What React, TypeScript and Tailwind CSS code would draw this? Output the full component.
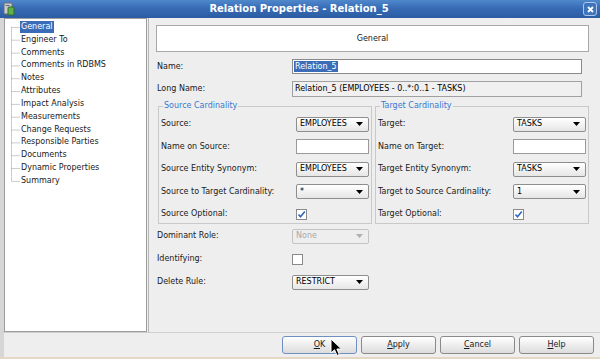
import React from 'react';

const treeItems = [
  'General',
  'Engineer To',
  'Comments',
  'Comments in RDBMS',
  'Notes',
  'Attributes',
  'Impact Analysis',
  'Measurements',
  'Change Requests',
  'Responsible Parties',
  'Documents',
  'Dynamic Properties',
  'Summary',
];

const Arrow = ({ disabled }: { disabled?: boolean }) => (
  <svg width="7" height="4" viewBox="0 0 7 4" className="mr-[5px] shrink-0">
    <path d="M0 0 H7 L3.5 4 Z" fill={disabled ? '#b0b0b0' : '#000'} />
  </svg>
);

const Combo = ({ value, disabled, w = 'w-[73px]' }: { value: string; disabled?: boolean; w?: string }) => (
  <div
    className={`flex h-[15px] ${w} items-center justify-between rounded-[2px] border ${
      disabled
        ? 'border-[#c4c4c4] bg-[#eeeeee] text-[#a8a8a8]'
        : 'border-[#8e8e8e] bg-gradient-to-b from-white to-[#e6e6e6] text-black'
    }`}
  >
    <span className="pl-[3px] leading-none">{value}</span>
    <Arrow disabled={disabled} />
  </div>
);

const TextBox = () => <div className="h-[15px] w-[73px] border border-[#9a9a9a] bg-white" />;

const Check = ({ checked }: { checked?: boolean }) => (
  <div className="flex h-[11px] w-[11px] items-center justify-center border border-[#8a8a8a] bg-white">
    {checked && (
      <svg width="9" height="9" viewBox="0 0 9 9">
        <path d="M1.5 4.5 L3.5 6.8 L7.8 1.5" fill="none" stroke="#2f66c6" strokeWidth="1.6" />
      </svg>
    )}
  </div>
);

const Row = ({ label, children }: { label: string; children: React.ReactNode }) => (
  <div className="flex h-[15px] items-center">
    <span className="w-[135px] shrink-0 leading-none">{label}</span>
    {children}
  </div>
);

const Group = ({ title, children }: { title: string; children: React.ReactNode }) => (
  <fieldset className="w-[213px] border border-[#c9c9c9] px-[2px] pb-[1px]">
    <legend className="ml-[2px] px-[1px] leading-[10px] text-[#3a78d0]">{title}</legend>
    <div className="flex flex-col gap-[7.5px] pt-[5.5px]">{children}</div>
  </fieldset>
);

const Btn = ({ m, rest, focus }: { m: string; rest: string; focus?: boolean }) => (
  <div
    className={`flex h-[18px] w-[75px] items-center justify-center rounded-[3px] border bg-gradient-to-b from-white to-[#dcdcdc] ${
      focus ? 'border-[#6f8fc0]' : 'border-[#8a8a8a]'
    }`}
  >
    <span>
      <span className="underline">{m}</span>
      {rest}
    </span>
  </div>
);

export default function App() {
  return (
    <div
      className="flex h-[359px] w-[600px] flex-col overflow-hidden bg-[#eeeeee] text-[8px] text-[#1a1a1a]"
      style={{ fontFamily: '"DejaVu Sans", sans-serif' }}
    >
      {/* Title bar */}
      <div className="flex h-[18px] shrink-0 items-center bg-gradient-to-b from-[#5088cc] via-[#3569b2] to-[#2b5da3] px-[3px]">
        <svg width="12" height="14" viewBox="0 0 12 14">
          <rect x="1" y="1" width="8" height="11" rx="1" fill="#c8ccd0" stroke="#6a6f75" />
          <rect x="5" y="5" width="6" height="8" rx="1" fill="#5fb04a" stroke="#2f6e25" />
          <rect x="2.5" y="3" width="4" height="1" fill="#6a6f75" />
        </svg>
        <div className="flex-1 text-center text-[10px] font-bold leading-none text-white">
          Relation Properties - Relation_5
        </div>
        <div className="flex h-[14px] w-[14px] items-center justify-center rounded-[3px] border border-[#a9c6ec] bg-[#3e74bd]">
          <svg width="7" height="7" viewBox="0 0 7 7">
            <path d="M1 1 L6 6 M6 1 L1 6" stroke="#fff" strokeWidth="1.8" />
          </svg>
        </div>
      </div>

      {/* Main */}
      <div className="flex h-[314px] shrink-0 border-l-[4px] border-[#d6d6d6]">
        {/* Tree */}
        <div className="w-[143px] shrink-0 border border-[#9c9c9c] bg-white pt-[1.5px]">
          <div className="flex">
            <svg width="9" height="167" viewBox="0 0 9 167" className="ml-[6px] shrink-0">
              <path
                d={`M0.5 6.4 V160.4 ${treeItems.map((_, i) => `M0.5 ${(6.4 + i * 12.83).toFixed(1)} H9`).join(' ')}`}
                stroke="#9a9a9a"
                strokeDasharray="1 1"
                fill="none"
              />
            </svg>
            <div className="flex flex-col">
              {treeItems.map((t, i) => (
                <div key={t} className="flex h-[12.83px] items-center">
                  <span
                    className={`px-[1px] leading-[12px] ${i === 0 ? 'bg-[#3a6cb8] text-white' : ''}`}
                  >
                    {t}
                  </span>
                </div>
              ))}
            </div>
          </div>
        </div>
        <div className="ml-[1px] w-[1px] shrink-0 bg-[#b8b8b8]" />

        {/* Form */}
        <div className="flex w-[433px] flex-col pl-[7px] pt-[7px]">
          <div className="flex h-[27px] w-[433px] items-center justify-center border border-[#a8a8a8] bg-white">
            General
          </div>

          <div className="mt-[7px] flex h-[15px] items-center pl-[1px]">
            <span className="w-[135px] shrink-0">Name:</span>
            <div className="flex h-[15px] flex-1 items-center border border-[#8a8a8a] bg-white pl-[1px]">
              <span className="bg-[#3a6cb8] px-[1px] leading-[11px] text-white">Relation_5</span>
            </div>
          </div>

          <div className="mt-[7px] flex h-[16px] items-center pl-[1px]">
            <span className="w-[135px] shrink-0">Long Name:</span>
            <div className="flex h-[16px] flex-1 items-center border border-[#a0a0a0] bg-[#f0f0f0] pl-[2px] text-black">
              Relation_5 (EMPLOYEES - 0..*:0..1 - TASKS)
            </div>
          </div>

          <div className="ml-[2px] mt-[4px] flex gap-[3px]">
            <Group title="Source Cardinality">
              <Row label="Source:">
                <Combo value="EMPLOYEES" />
              </Row>
              <Row label="Name on Source:">
                <TextBox />
              </Row>
              <Row label="Source Entity Synonym:">
                <Combo value="EMPLOYEES" />
              </Row>
              <Row label="Source to Target Cardinality:">
                <Combo value="*" />
              </Row>
              <Row label="Source Optional:">
                <Check checked />
              </Row>
            </Group>
            <Group title="Target Cardinality">
              <Row label="Target:">
                <Combo value="TASKS" />
              </Row>
              <Row label="Name on Target:">
                <TextBox />
              </Row>
              <Row label="Target Entity Synonym:">
                <Combo value="TASKS" />
              </Row>
              <Row label="Target to Source Cardinality:">
                <Combo value="1" />
              </Row>
              <Row label="Target Optional:">
                <Check checked />
              </Row>
            </Group>
          </div>

          <div className="mt-[5px] flex flex-col gap-[8px] pl-[1px]">
            <Row label="Dominant Role:">
              <Combo value="None" disabled w="w-[77px]" />
            </Row>
            <Row label="Identifying:">
              <Check />
            </Row>
            <Row label="Delete Rule:">
              <Combo value="RESTRICT" w="w-[77px]" />
            </Row>
          </div>
        </div>
      </div>

      {/* Button bar */}
      <div className="flex flex-1 items-start justify-end gap-[4px] border-t border-[#cfcfcf] border-l-[4px] border-l-[#d6d6d6] pr-[6px] pt-[3px]">
        <div className="relative">
          <Btn m="O" rest="K" focus />
          <svg width="13" height="19" viewBox="0 0 13 19" className="absolute left-[48px] top-[2px]">
            <path d="M1 1 V15 L4.5 11.8 L7 17.5 L9.3 16.5 L6.9 11 H11.5 Z" fill="#000" stroke="#fff" strokeWidth="1" />
          </svg>
        </div>
        <Btn m="A" rest="pply" />
        <Btn m="C" rest="ancel" />
        <Btn m="H" rest="elp" />
      </div>
      <div className="h-[2px] shrink-0 bg-[#e4d8c4]" />
    </div>
  );
}
